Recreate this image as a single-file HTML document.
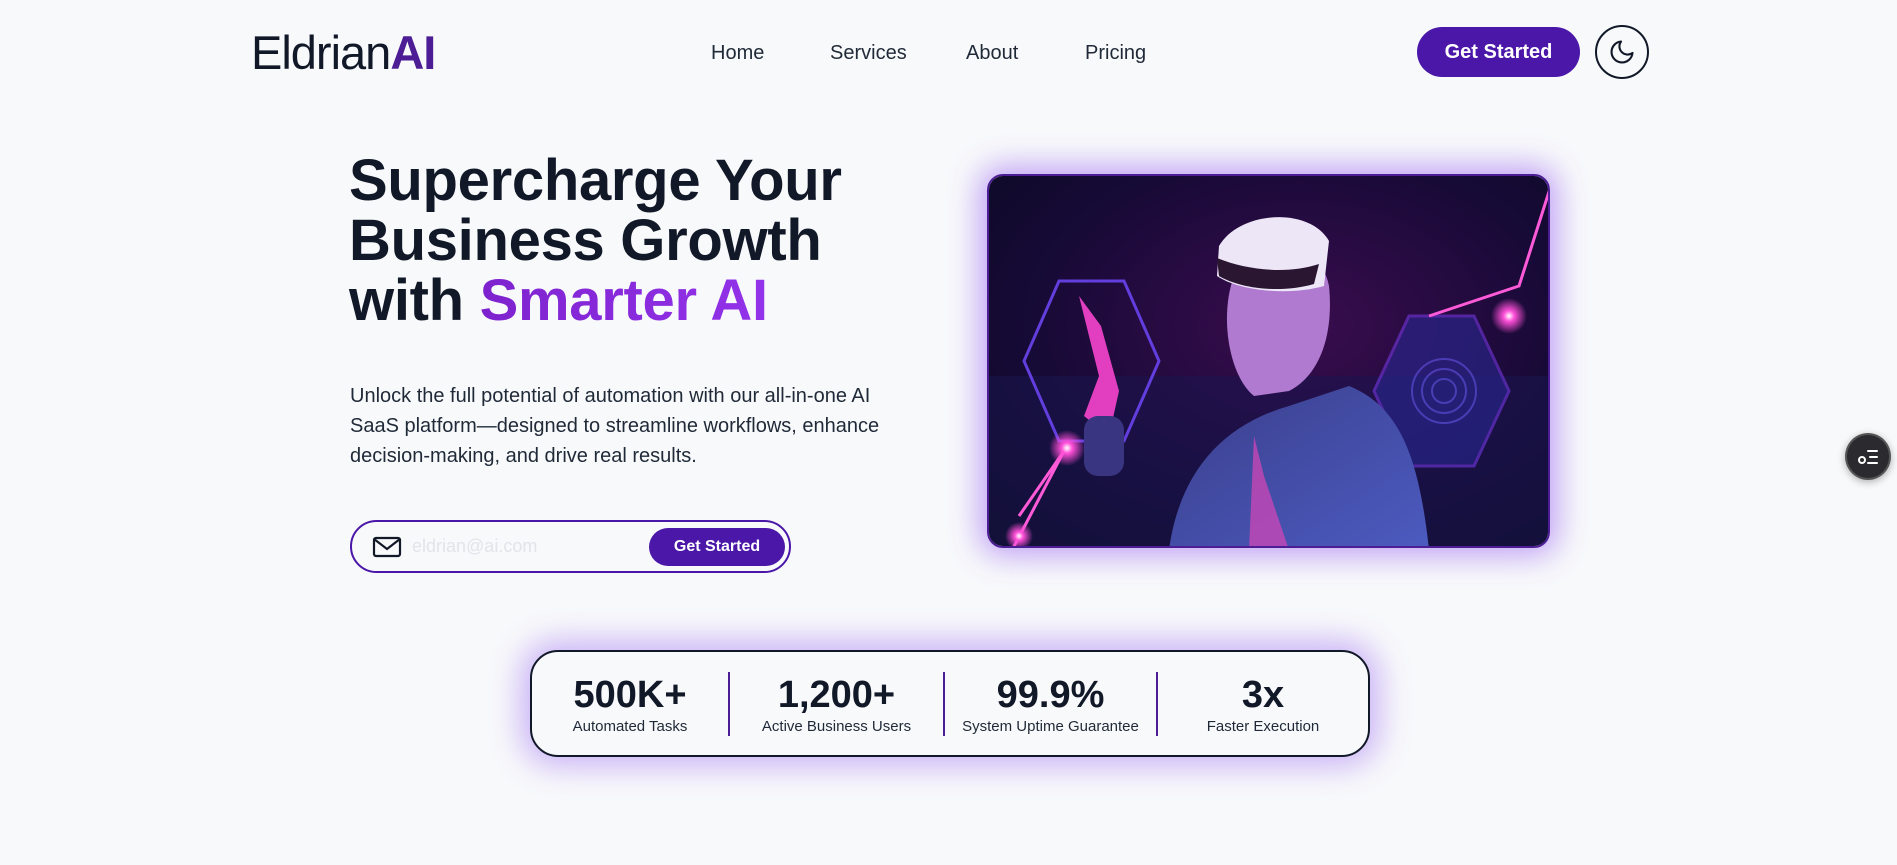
<!DOCTYPE html>
<html><head><meta charset="utf-8"><style>
*{margin:0;padding:0;box-sizing:border-box}
body{width:1897px;height:865px;background:#f8f9fb;font-family:"Liberation Sans",sans-serif;color:#111827;position:relative;overflow:hidden}
.logo{position:absolute;left:251px;top:25px;font-size:47px;letter-spacing:-1px;color:#111827}
.logo b{color:#4c1d95;font-weight:700}
.nav a{position:absolute;top:42px;font-size:20px;color:#1f2937;text-decoration:none}
.btn{position:absolute;left:1417px;top:27px;width:163px;height:50px;border-radius:25px;background:#4a17a8;color:#fff;font-weight:700;font-size:20px;display:flex;align-items:center;justify-content:center}
.moon{position:absolute;left:1595px;top:25px;width:54px;height:54px;border:2px solid #111827;border-radius:50%;display:flex;align-items:center;justify-content:center}
h1{position:absolute;left:349px;top:151px;font-size:58px;line-height:60px;font-weight:700;color:#111827;letter-spacing:-0.3px}
h1 span{background:linear-gradient(90deg,#7e22ce,#9333ea);-webkit-background-clip:text;color:transparent}
p.d{position:absolute;left:350px;top:381px;width:560px;font-size:20px;line-height:30px;color:#1f2937}
.email{position:absolute;left:350px;top:520px;width:441px;height:53px;border:2px solid #4a17a8;border-radius:27px}
.email .ph{position:absolute;left:60px;top:14px;font-size:18px;color:#e2e4ea}
.email .b2{position:absolute;right:4px;top:6px;width:136px;height:38px;border-radius:19px;background:#4a17a8;color:#fff;font-weight:700;font-size:16px;display:flex;align-items:center;justify-content:center}
.img{position:absolute;left:987px;top:174px;width:563px;height:374px;border-radius:16px;border:2px solid #4c1d95;overflow:hidden;box-shadow:0 0 30px 8px rgba(124,58,237,.45)}
.stats{position:absolute;left:530px;top:650px;width:840px;height:107px;border:2px solid #111827;border-radius:28px;background:#f8f9fb;box-shadow:0 0 30px 10px rgba(124,58,237,.35)}
.st{position:absolute;top:22px;text-align:center}
.st b{display:block;font-size:38px;line-height:42px;color:#111827}
.st span{display:block;font-size:15px;color:#1f2937;margin-top:2px}
.dv{position:absolute;top:20px;width:2px;height:64px;background:#4c1d95}
.fab{position:absolute;left:1845px;top:433px;width:46px;height:47px;border-radius:50%;background:#2b2b2f;border:2px solid #555;box-shadow:0 2px 8px rgba(0,0,0,.3)}
</style></head><body>
<div class="logo">Eldrian<b>AI</b></div>
<div class="nav"><a style="left:711px">Home</a><a style="left:830px">Services</a><a style="left:966px">About</a><a style="left:1085px">Pricing</a></div>
<div class="btn">Get Started</div>
<div class="moon"><svg width="28" height="28" viewBox="0 0 24 24" fill="none" stroke="#111827" stroke-width="1.8" stroke-linecap="round" stroke-linejoin="round"><path d="M21 12.8A9 9 0 1 1 11.2 3a7 7 0 0 0 9.8 9.8z"/></svg></div>
<h1>Supercharge Your<br>Business Growth<br>with <span>Smarter AI</span></h1>
<p class="d">Unlock the full potential of automation with our all-in-one AI SaaS platform—designed to streamline workflows, enhance decision-making, and drive real results.</p>
<div class="email"><svg style="position:absolute;left:20px;top:14px" width="30" height="22" viewBox="0 0 30 22" fill="none" stroke="#111827" stroke-width="2.2"><rect x="2" y="2" width="26" height="18" rx="2"/><path d="M2 3l13 10 13-10"/></svg><span class="ph">eldrian@ai.com</span><div class="b2">Get Started</div></div>
<div class="img"><svg width="563" height="374" viewBox="0 0 563 374">
<defs><radialGradient id="bg" cx="0.55" cy="0.4" r="0.8"><stop offset="0" stop-color="#3a0c4e"/><stop offset="0.6" stop-color="#160a36"/><stop offset="1" stop-color="#0b0a22"/></radialGradient>
<linearGradient id="body" x1="0" y1="0" x2="1" y2="1"><stop offset="0" stop-color="#3b3f8c"/><stop offset="1" stop-color="#4c5bc0"/></linearGradient>
<radialGradient id="gl" cx="0.5" cy="0.5" r="0.5"><stop offset="0" stop-color="#fff"/><stop offset="0.3" stop-color="#ff4fd8"/><stop offset="1" stop-color="#ff4fd8" stop-opacity="0"/></radialGradient></defs>
<rect width="563" height="374" fill="url(#bg)"/>
<rect x="0" y="200" width="563" height="174" fill="#1a1550" opacity=".5"/>
<polygon points="70,105 135,105 170,185 135,265 70,265 35,185" fill="none" stroke="#6a44f0" stroke-width="3" opacity=".9"/>
<polygon points="420,140 485,140 520,215 485,290 420,290 385,215" fill="#2a2a9a" opacity=".55" stroke="#7d3bf0" stroke-width="3"/>
<g fill="none" stroke="#5a4ad0" stroke-width="2" opacity=".7"><circle cx="455" cy="215" r="12"/><circle cx="455" cy="215" r="22"/><circle cx="455" cy="215" r="32"/></g>
<path d="M565 0 L530 110 L440 140 M30 340 L75 275 L20 380" stroke="#ff5ad8" stroke-width="3" fill="none"/>
<circle cx="520" cy="140" r="18" fill="url(#gl)"/><circle cx="78" cy="272" r="18" fill="url(#gl)"/><circle cx="30" cy="360" r="14" fill="url(#gl)"/>
<path d="M180 374 C190 300 230 250 300 230 L360 210 C410 230 430 280 440 374 Z" fill="url(#body)"/>
<path d="M265 220 C240 200 230 140 245 100 C270 60 330 60 340 110 C345 160 330 200 300 215 Z" fill="#b07ad0"/>
<path d="M230 70 C250 35 320 30 340 65 L335 110 C300 120 250 115 228 100 Z" fill="#ece6f7"/>
<path d="M228 82 C260 95 300 98 330 88 L325 108 C290 118 250 112 230 100 Z" fill="#2a1630"/>
<path d="M265 260 L275 300 L300 374 L260 374 Z" fill="#d846b8" opacity=".7"/>
<path d="M90 120 L110 200 L95 240 L120 260 L130 215 L112 150 Z" fill="#e23fc0"/>
<rect x="95" y="240" width="40" height="60" rx="14" fill="#3a3580"/>
</svg></div>
<div class="stats">
<div class="st" style="left:0;width:196px"><b>500K+</b><span>Automated Tasks</span></div>
<div class="dv" style="left:196px"></div>
<div class="st" style="left:198px;width:213px"><b>1,200+</b><span>Active Business Users</span></div>
<div class="dv" style="left:411px"></div>
<div class="st" style="left:413px;width:211px"><b>99.9%</b><span>System Uptime Guarantee</span></div>
<div class="dv" style="left:624px"></div>
<div class="st" style="left:626px;width:210px"><b>3x</b><span>Faster Execution</span></div>
</div>
<div class="fab"><svg style="position:absolute;left:10px;top:11px" width="22" height="22" viewBox="0 0 22 22" fill="none" stroke="#fff" stroke-width="2" stroke-linecap="round"><path d="M11 5h9M13 11h7M11 17h9"/><circle cx="5" cy="14" r="3"/></svg></div>
</body></html>
